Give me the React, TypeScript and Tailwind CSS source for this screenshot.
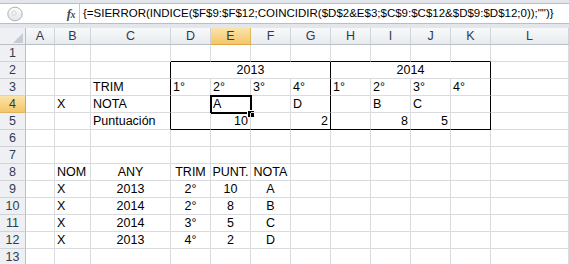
import React from "react";

type Align = "l" | "c" | "r";
type Cell = { v: string; a?: Align; span?: number };

const cols = ["A", "B", "C", "D", "E", "F", "G", "H", "I", "J", "K", "L"];
const tableCols = ["D", "E", "F", "G", "H", "I", "J", "K"];

const widths: Record<string, string> = {
  A: "w-[29px]",
  B: "w-[36px]",
  C: "w-[80px]",
  D: "w-[40px]",
  E: "w-[40px]",
  F: "w-[40px]",
  G: "w-[40px]",
  H: "w-[40px]",
  I: "w-[40px]",
  J: "w-[40px]",
  K: "w-[40px]",
  L: "w-[78px]",
};

const data: Record<number, Record<string, Cell>> = {
  2: { D: { v: "2013", a: "c", span: 4 }, H: { v: "2014", a: "c", span: 4 } },
  3: {
    C: { v: "TRIM" },
    D: { v: "1°" },
    E: { v: "2°" },
    F: { v: "3°" },
    G: { v: "4°" },
    H: { v: "1°" },
    I: { v: "2°" },
    J: { v: "3°" },
    K: { v: "4°" },
  },
  4: {
    B: { v: "X" },
    C: { v: "NOTA" },
    E: { v: "A" },
    G: { v: "D" },
    I: { v: "B" },
    J: { v: "C" },
  },
  5: {
    C: { v: "Puntuación" },
    E: { v: "10", a: "r" },
    G: { v: "2", a: "r" },
    I: { v: "8", a: "r" },
    J: { v: "5", a: "r" },
  },
  8: {
    B: { v: "NOM" },
    C: { v: "ANY", a: "c" },
    D: { v: "TRIM", a: "c" },
    E: { v: "PUNT.", a: "c" },
    F: { v: "NOTA", a: "c" },
  },
  9: { B: { v: "X" }, C: { v: "2013", a: "c" }, D: { v: "2°", a: "c" }, E: { v: "10", a: "c" }, F: { v: "A", a: "c" } },
  10: { B: { v: "X" }, C: { v: "2014", a: "c" }, D: { v: "2°", a: "c" }, E: { v: "8", a: "c" }, F: { v: "B", a: "c" } },
  11: { B: { v: "X" }, C: { v: "2014", a: "c" }, D: { v: "3°", a: "c" }, E: { v: "5", a: "c" }, F: { v: "C", a: "c" } },
  12: { B: { v: "X" }, C: { v: "2013", a: "c" }, D: { v: "4°", a: "c" }, E: { v: "2", a: "c" }, F: { v: "D", a: "c" } },
};

const alignClass = (a?: Align) =>
  a === "c" ? "justify-center" : a === "r" ? "justify-end" : "justify-start";

function FormulaBar() {
  return (
    <div className="h-[28px] bg-[#e3e7ec] pt-[3px]">
      <div className="h-[21px] bg-white border-y border-[#b9bfc7] flex items-center">
        <div className="w-[80px] h-full flex items-center border-r border-[#c3c8ce]">
          <svg width="16" height="16" viewBox="0 0 16 16" className="ml-[7px]">
            <defs>
              <linearGradient id="pill" x1="0" y1="0" x2="0" y2="1">
                <stop offset="0" stopColor="#fdfdfd" />
                <stop offset="1" stopColor="#e2e5e9" />
              </linearGradient>
            </defs>
            <ellipse cx="8" cy="8" rx="7.2" ry="6.8" fill="url(#pill)" stroke="#aab1ba" strokeWidth="1" />
            <circle cx="7" cy="7" r="2.2" fill="#f4f5f7" stroke="#c9ced4" strokeWidth="0.8" />
          </svg>
          <span className="ml-auto mr-[4px] text-[13px] italic font-bold text-[#4a4a4a] font-['Liberation_Serif',serif] leading-none tracking-[-0.5px]">
            f<span className="text-[10px]">x</span>
          </span>
        </div>
        <div className="pl-[3px] text-[11.5px] text-black whitespace-nowrap leading-none">
          {'{=SIERROR(INDICE($F$9:$F$12;COINCIDIR($D$2&E$3;$C$9:$C$12&$D$9:$D$12;0));"")}'}
        </div>
      </div>
    </div>
  );
}

function ColumnHeaders() {
  return (
    <div className="flex h-[17px]">
      <div className="w-[26px] h-full shrink-0 bg-[#eef0f3] border-r border-b border-[#b9bfc7]">
        <svg width="26" height="17" viewBox="0 0 26 17" className="block">
          <polygon points="23,5 23,15 13,15" fill="#c7ccd2" />
        </svg>
      </div>
      {cols.map((c) => (
        <div
          key={c}
          className={`${widths[c]} shrink-0 h-full flex items-center justify-center border-r border-b text-[12.5px] ${
            c === "E"
              ? "bg-linear-to-b from-[#fbe4a8] to-[#f3c669] border-r-[#e3b55a] border-b-[#e0a53f] text-[#3a3a3a]"
              : "bg-linear-to-b from-[#f8f9fa] to-[#e8ebee] border-r-[#d0d4d9] border-b-[#b9bfc7] text-[#2f3c50]"
          }`}
        >
          {c}
        </div>
      ))}
    </div>
  );
}

function Row({ r }: { r: number }) {
  const rowData = data[r] ?? {};
  const cells: React.ReactNode[] = [];
  for (let i = 0; i < cols.length; i++) {
    const c = cols[i];
    const cell = rowData[c];
    const span = cell?.span ?? 1;
    const lastCol = cols[i + span - 1];
    const inTable = r >= 2 && r <= 5;
    const blackRight = inTable && (lastCol === "C" || lastCol === "G" || lastCol === "K");
    const blackBottom = (r === 1 || r === 5) && tableCols.includes(c);
    const active = r === 4 && c === "E";
    cells.push(
      <div
        key={c}
        className={`${span === 4 ? "w-[160px]" : widths[c]} shrink-0 h-full relative flex items-end px-[2px] pb-[1px] border-r border-b whitespace-nowrap ${alignClass(
          cell?.a
        )} ${blackRight ? "border-r-black" : "border-r-[#d9dbde]"} ${
          blackBottom ? "border-b-black" : "border-b-[#d9dbde]"
        }`}
      >
        {cell?.v}
        {active && (
          <div className="absolute -left-[1px] -top-[1px] w-[42px] h-[19px] border-2 border-black">
            <div className="absolute left-[35px] top-[13px] w-[7px] h-[7px] bg-black border-l border-t border-white" />
          </div>
        )}
      </div>
    );
    i += span - 1;
  }
  return (
    <div className="flex h-[17px]">
      <div
        className={`w-[26px] shrink-0 h-full flex items-center justify-center border-r border-b text-[12.5px] ${
          r === 4
            ? "bg-linear-to-b from-[#fbe4a8] to-[#f3c669] border-r-[#e0a53f] border-b-[#e3b55a] text-[#3a3a3a]"
            : "bg-[#eef0f3] border-r-[#b9bfc7] border-b-[#d0d4d9] text-[#2f3c50]"
        }`}
      >
        {r}
      </div>
      {cells}
    </div>
  );
}

export default function App() {
  const rows = Array.from({ length: 13 }, (_, i) => i + 1);
  return (
    <div className="w-[569px] h-[264px] overflow-hidden bg-white font-['Liberation_Sans',Arial,sans-serif] text-[12.5px] leading-[14px] text-black">
      <FormulaBar />
      <ColumnHeaders />
      {rows.map((r) => (
        <Row key={r} r={r} />
      ))}
    </div>
  );
}
